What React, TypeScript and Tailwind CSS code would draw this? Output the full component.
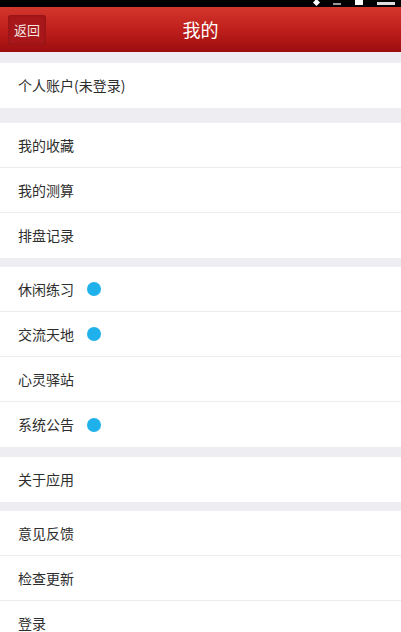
import React from 'react';

type Item = { label: string; dot?: boolean };

const groups: { gap: string; items: Item[] }[] = [
  { gap: 'h-[11px]', items: [{ label: '个人账户(未登录)' }] },
  { gap: 'h-[15px]', items: [{ label: '我的收藏' }, { label: '我的测算' }, { label: '排盘记录' }] },
  {
    gap: 'h-[9px]',
    items: [
      { label: '休闲练习', dot: true },
      { label: '交流天地', dot: true },
      { label: '心灵驿站' },
      { label: '系统公告', dot: true },
    ],
  },
  { gap: 'h-[10px]', items: [{ label: '关于应用' }] },
  { gap: 'h-[9px]', items: [{ label: '意见反馈' }, { label: '检查更新' }, { label: '登录' }] },
];

const Row = ({ item, last }: { item: Item; last: boolean }) => (
  <div className={`h-[45px] flex items-center gap-[13px] pl-[18px] bg-white ${last ? '' : 'border-b border-[#ececef]'}`}>
    <span className="text-[14px] text-[#2e2e2e]">{item.label}</span>
    {item.dot && <span className="w-[14px] h-[14px] rounded-full bg-[#1fb1ec]" />}
  </div>
);

export default function App() {
  return (
    <div
      className="w-[401px] h-[632px] overflow-hidden bg-[#eeeef2]"
      style={{ fontFamily: '"Noto Sans CJK SC", "Liberation Sans", sans-serif' }}
    >
      {/* status bar, mostly clipped */}
      <div className="h-[7px] bg-black flex items-end justify-end gap-[14px] pr-[6px] pb-[2px]">
        <div className="w-[5px] h-[5px] bg-white rotate-45" />
        <div className="w-[8px] h-[2px] bg-[#9a9a9a]" />
        <div className="w-[8px] h-[5px] bg-white" />
        <div className="w-[18px] h-[3px] bg-[#dddddd]" />
      </div>

      {/* header */}
      <div className="h-[45px] grid grid-cols-[1fr_auto_1fr] items-center px-[8px] bg-gradient-to-b from-[#d3362c] via-[#bf1f1c] to-[#9c0d0f]">
        <div className="justify-self-start h-[30px] w-[38px] rounded-[3px] bg-[#a8171a] flex items-center justify-center shadow-[inset_0_0_3px_rgba(0,0,0,0.25)]">
          <span className="text-[13px] text-[#f4e6e2]">返回</span>
        </div>
        <span className="text-[18px] text-white">我的</span>
        <div />
      </div>

      {groups.map((g, gi) => (
        <div key={gi}>
          <div className={g.gap} />
          {g.items.map((it, i) => (
            <Row key={it.label} item={it} last={i === g.items.length - 1} />
          ))}
        </div>
      ))}
    </div>
  );
}
